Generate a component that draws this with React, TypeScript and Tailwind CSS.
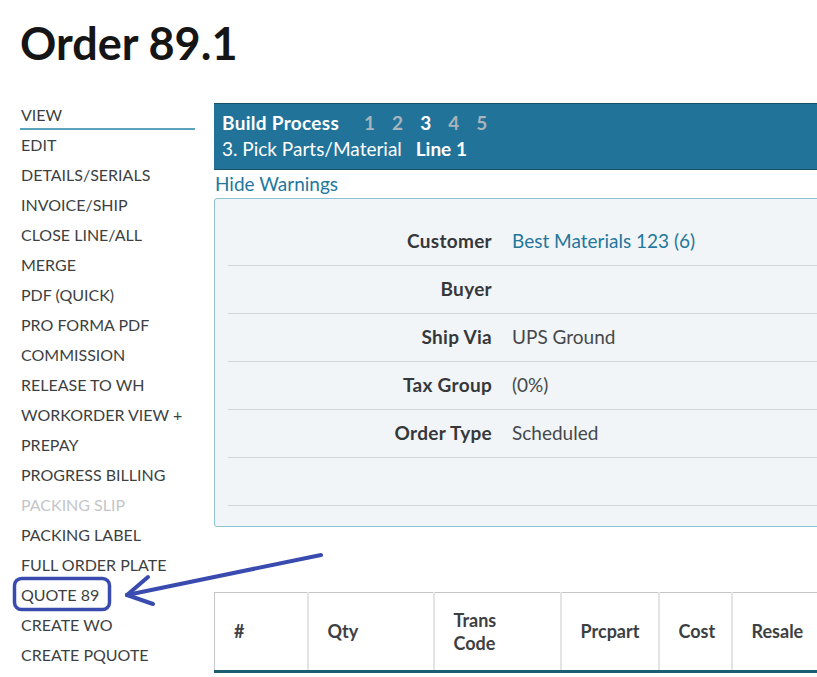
import React from 'react';

const menu = [
  'VIEW',
  'EDIT',
  'DETAILS/SERIALS',
  'INVOICE/SHIP',
  'CLOSE LINE/ALL',
  'MERGE',
  'PDF (QUICK)',
  'PRO FORMA PDF',
  'COMMISSION',
  'RELEASE TO WH',
  'WORKORDER VIEW +',
  'PREPAY',
  'PROGRESS BILLING',
  'PACKING SLIP',
  'PACKING LABEL',
  'FULL ORDER PLATE',
  'QUOTE 89',
  'CREATE WO',
  'CREATE PQUOTE',
  'CREATE SHIPMENT',
];

const details = [
  { label: 'Customer', value: 'Best Materials 123 (6)', link: true },
  { label: 'Buyer', value: '' },
  { label: 'Ship Via', value: 'UPS Ground' },
  { label: 'Tax Group', value: '(0%)' },
  { label: 'Order Type', value: 'Scheduled' },
  { label: '', value: '' },
];

const columns = [
  { name: '#', w: 'w-[93px]' },
  { name: 'Qty', w: 'w-[126px]' },
  { name: 'Trans Code', w: 'w-[127px]' },
  { name: 'Prcpart', w: 'w-[98px]' },
  { name: 'Cost', w: 'w-[73px]' },
  { name: 'Resale', w: 'w-[120px]' },
];

function Sidebar() {
  return (
    <ul className="w-[175px] shrink-0">
      {menu.map((item, i) => (
        <li
          key={item}
          className={
            'h-[30px] flex items-center pl-[1px] text-[16px] ' +
            (i === 0 ? 'border-b-2 border-[#5ba3bd] pt-[2px] ' : '') +
            (item === 'PACKING SLIP' ? 'text-[#c4c6c8]' : 'text-[#3d3f42]')
          }
        >
          {item}
        </li>
      ))}
    </ul>
  );
}

function BuildBar() {
  return (
    <div className="bg-[#21739a] border-y border-[#174f68] px-2 pt-[6px] pb-[7px] text-white text-[19px] leading-[26px]">
      <div className="flex items-center">
        <span className="font-bold tracking-[0.3px]">Build Process</span>
        <span className="ml-[25px] flex gap-[17px] font-bold">
          <span className="text-[#a9b4bb]">1</span>
          <span className="text-[#a9b4bb]">2</span>
          <span className="text-white">3</span>
          <span className="text-[#a9b4bb]">4</span>
          <span className="text-[#a9b4bb]">5</span>
        </span>
      </div>
      <div>
        3. Pick Parts/Material <span className="font-bold ml-[9px]">Line 1</span>
      </div>
    </div>
  );
}

function DetailsPanel() {
  return (
    <div className="mt-[2px] bg-[#f2f5f7] border border-[#8cc3d1] rounded-[3px] pt-[19px] pb-[20px] pl-[13px]">
      {details.map((d, i) => (
        <div key={i} className="h-[48px] flex items-center border-b border-[#cfd5d9] text-[19px]">
          <div className="w-[264px] text-right font-bold text-[#35383b] tracking-[0.3px]">{d.label}</div>
          <div className={'ml-[20px] ' + (d.link ? 'text-[#23779c]' : 'text-[#45484b]')}>{d.value}</div>
        </div>
      ))}
    </div>
  );
}

function LinesTable() {
  return (
    <table className="mt-[65px] border-collapse border-t border-l border-[#c4c6c8] text-[18px] font-bold text-[#3d4043]">
      <thead>
        <tr className="border-b-[3px] border-[#1c5d73]">
          {columns.map((c) => (
            <th
              key={c.name}
              className={c.w + ' h-[79px] text-left align-middle pl-[19px] pr-2 leading-[23px] font-bold border-r-2 border-[#e2e4e6]'}
            >
              {c.name === 'Trans Code' ? (
                <>
                  Trans
                  <br />
                  Code
                </>
              ) : (
                c.name
              )}
            </th>
          ))}
        </tr>
      </thead>
    </table>
  );
}

function Annotation() {
  return (
    <svg className="absolute left-0 top-0 pointer-events-none" width="817" height="677">
      <rect x="14.5" y="578.5" width="95" height="31" rx="7" fill="none" stroke="#3a4bb0" strokeWidth="3.5" />
      <g stroke="#3a4bb0" strokeWidth="4" strokeLinecap="round" fill="none">
        <line x1="321" y1="555" x2="127" y2="595" />
        <line x1="127" y1="595" x2="148" y2="577" />
        <line x1="127" y1="595" x2="153" y2="604" />
      </g>
    </svg>
  );
}

export default function App() {
  return (
    <div className="relative w-[817px] h-[677px] overflow-hidden bg-white font-['Lato',sans-serif]">
      <h1 className="pl-5 pt-[15px] text-[45px] leading-[56px] font-bold text-[#151515]">Order 89.1</h1>
      <div className="flex pl-5 mt-[29px]">
        <Sidebar />
        <div className="ml-[19px] mt-[3px] w-[700px] shrink-0">
          <BuildBar />
          <div className="pt-[2px] text-[19px] leading-[24px] text-[#23779c] pl-[1px]">Hide Warnings</div>
          <DetailsPanel />
          <LinesTable />
        </div>
      </div>
      <Annotation />
    </div>
  );
}
